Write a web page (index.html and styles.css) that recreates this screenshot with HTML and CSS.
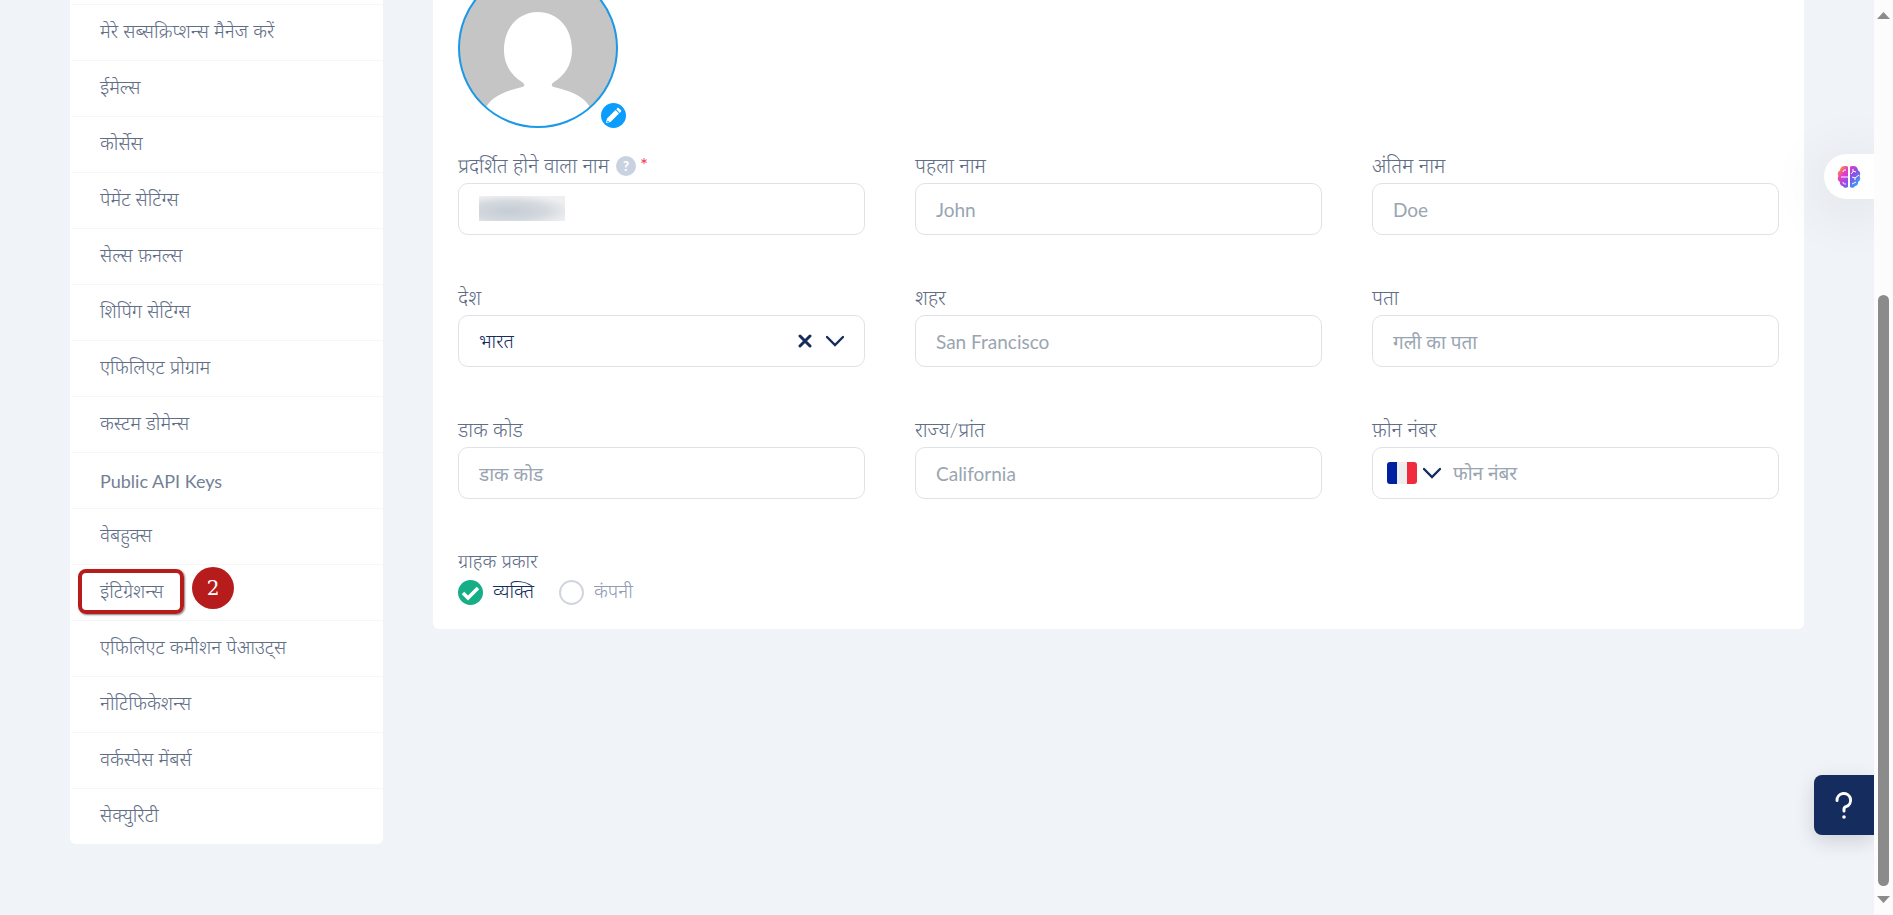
FILE: index.html
```html
<!DOCTYPE html>
<html lang="hi">
<head>
    <meta charset="UTF-8">
    <title>प्रोफ़ाइल</title>
    <link rel="stylesheet" href="styles.css">
</head>
<body>
    <div class="page">
        <nav class="sidebar">
            <ul class="menu">
                <li><a href="#">मेरे सब्सक्रिप्शन्स मैनेज करें</a></li>
                <li><a href="#">ईमेल्स</a></li>
                <li><a href="#">कोर्सेस</a></li>
                <li><a href="#">पेमेंट सेटिंग्स</a></li>
                <li><a href="#">सेल्स फ़नल्स</a></li>
                <li><a href="#">शिपिंग सेटिंग्स</a></li>
                <li><a href="#">एफिलिएट प्रोग्राम</a></li>
                <li><a href="#">कस्टम डोमेन्स</a></li>
                <li><a href="#" class="latin" lang="en">Public API Keys</a></li>
                <li><a href="#">वेबहुक्स</a></li>
                <li class="marked">
                    <a href="#">इंटिग्रेशन्स</a>
                    <span class="mark-box"></span>
                    <span class="mark-step">2</span>
                </li>
                <li><a href="#">एफिलिएट कमीशन पेआउट्स</a></li>
                <li><a href="#">नोटिफिकेशन्स</a></li>
                <li><a href="#">वर्कस्पेस मेंबर्स</a></li>
                <li><a href="#">सेक्युरिटी</a></li>
            </ul>
        </nav>

        <main class="card">
            <div class="avatar">
                <svg class="avatar-img" viewBox="0 0 160 160" aria-hidden="true">
                    <defs>
                        <clipPath id="circle"><circle cx="80" cy="80" r="79"/></clipPath>
                    </defs>
                    <g clip-path="url(#circle)">
                        <rect width="160" height="160" fill="#c5c5c5"/>
                        <path fill="#fff" d="M80 44c19 0 34 15 34 38 0 15-8 26-18 32-3 2-3 4 0 5 15 4 30 8 37 22v19H27v-19c7-14 22-18 37-22 3-1 3-3 0-5-10-6-18-17-18-32 0-23 15-38 34-38z"/>
                    </g>
                    <circle cx="80" cy="80" r="79" fill="none" stroke="#1b98e8" stroke-width="2"/>
                </svg>
                <button class="avatar-edit" aria-label="एडिट">
                    <svg width="25" height="25" viewBox="0 0 25 25" aria-hidden="true">
                        <path fill="#fff" d="M5 20l1-4.500 8.500-8.500 3.500 3.500L9.500 19zM15.300 6.200l1-1c.5-.5 1.100-.5 1.600 0l2 2c.5.5.5 1.100 0 1.600l-1.100 1.100z"/>
                        <circle cx="7" cy="18.500" r=".8" fill="#0a9dfc"/>
                    </svg>
                </button>
            </div>

            <form class="fields">
                <div class="field">
                    <div class="label-row">
                        <label for="display">प्रदर्शित होने वाला नाम</label>
                        <span class="hint">?</span>
                        <span class="required">*</span>
                    </div>
                    <div class="masked">
                        <input type="text" id="display">
                        <span class="mask"></span>
                    </div>
                </div>
                <div class="field">
                    <label for="first">पहला नाम</label>
                    <input type="text" id="first" placeholder="John">
                </div>
                <div class="field">
                    <label for="last">अंतिम नाम</label>
                    <input type="text" id="last" placeholder="Doe">
                </div>
                <div class="field">
                    <label for="country">देश</label>
                    <div class="box">
                        <select id="country">
                            <option>भारत</option>
                        </select>
                        <button type="button" class="clear" aria-label="हटाएं">
                            <svg width="14" height="14" viewBox="0 0 14 14" aria-hidden="true"><path d="M2 2l10 10M12 2L2 12"/></svg>
                        </button>
                        <svg class="chevron" width="18" height="12" viewBox="0 0 18 12" aria-hidden="true"><path d="M1 2l8 8 8-8"/></svg>
                    </div>
                </div>
                <div class="field">
                    <label for="city">शहर</label>
                    <input type="text" id="city" placeholder="San Francisco">
                </div>
                <div class="field">
                    <label for="address">पता</label>
                    <input type="text" id="address" placeholder="गली का पता">
                </div>
                <div class="field">
                    <label for="zip">डाक कोड</label>
                    <input type="text" id="zip" placeholder="डाक कोड">
                </div>
                <div class="field">
                    <label for="state">राज्य/प्रांत</label>
                    <input type="text" id="state" placeholder="California">
                </div>
                <div class="field">
                    <label for="phone">फ़ोन नंबर</label>
                    <div class="box phone">
                        <button type="button" class="flag-button" aria-label="France">
                            <svg class="flag" width="30" height="22" viewBox="0 0 30 22" aria-hidden="true">
                                <path fill="#00209f" d="M3 0h7v22H3a3 3 0 0 1-3-3V3a3 3 0 0 1 3-3z"/>
                                <path fill="#eee" d="M10 0h10v22H10z"/>
                                <path fill="#ef2b3d" d="M20 0h7a3 3 0 0 1 3 3v16a3 3 0 0 1-3 3h-7z"/>
                            </svg>
                            <svg class="chevron" width="18" height="12" viewBox="0 0 18 12" aria-hidden="true"><path d="M1 2l8 8 8-8"/></svg>
                        </button>
                        <input type="tel" id="phone" placeholder="फोन नंबर">
                    </div>
                </div>
                <fieldset class="customer">
                    <legend>ग्राहक प्रकार</legend>
                    <div class="options">
                        <label class="option"><input type="radio" name="customer" checked><span>व्यक्ति</span></label>
                        <label class="option"><input type="radio" name="customer"><span>कंपनी</span></label>
                    </div>
                </fieldset>
            </form>
        </main>

        <button class="brain" aria-label="AI">
            <svg width="24" height="24" viewBox="0 0 24 24" aria-hidden="true">
                <defs>
                    <linearGradient id="brain" x1="0" y1="0" x2="24" y2="20" gradientUnits="userSpaceOnUse">
                        <stop offset=".1" stop-color="#ff9a1f"/>
                        <stop offset=".35" stop-color="#e63cc8"/>
                        <stop offset=".6" stop-color="#8a4fe6"/>
                        <stop offset="1" stop-color="#22b4ff"/>
                    </linearGradient>
                </defs>
                <path fill="url(#brain)" d="M11 2v20c-1 1-4 1.500-5-1-2 0-3.500-2-3-4-2-1-3-4-1.500-6C0 9 1 6 3 5.500 3 3 5 1 7.500 1 9 .7 10.500 1 11 2zM13 2v20c1 1 4 1.500 5-1 2 0 3.500-2 3-4 2-1 3-4 1.500-6C24 9 23 6 21 5.500 21 3 19 1 16.500 1 15 .7 13.500 1 13 2z"/>
                <path fill="none" stroke="#fff" d="M4 12h7M6 7c0-2 1-2 3-2M6 17c0 2 1 2 3 2M16 4v3l-2 2M16 6l3 1M22 10l-4 3v2M18 13l-3-1M19 17l-4 2"/>
            </svg>
        </button>
        <button class="help" aria-label="सहायता">
            <svg width="18" height="28" viewBox="0 0 18 28" aria-hidden="true">
                <path fill="none" stroke="#fff" stroke-width="3" stroke-linecap="round" stroke-linejoin="round" d="M2 9.500A6.800 6.800 0 1 1 11 15.700c-1.500.5-2 1-2 2.300v2"/>
                <circle cx="9" cy="26" r="1.800" fill="#fff"/>
            </svg>
        </button>
    </div>

    <div class="scrollbar">
        <svg width="13" height="7" viewBox="0 0 13 7" aria-hidden="true"><path fill="#8b8b8b" d="M0 7L6.500 0 13 7z"/></svg>
        <div class="track"><div class="thumb"></div></div>
        <svg width="13" height="7" viewBox="0 0 13 7" aria-hidden="true"><path fill="#8b8b8b" d="M0 0l6.500 7L13 0z"/></svg>
    </div>
</body>
</html>
```

FILE: styles.css
```css
* {
    box-sizing: border-box;
}

body {
    margin: 0;
    height: 100vh;
    display: flex;
    overflow: hidden;
    font-family: Lato, "Noto Sans Devanagari", "Noto Sans", sans-serif;
    font-size: 19px;
    font-weight: 300;
    line-height: 24px;
    color: #5f6e86;
    background: #f0f4f9;
}

button {
    padding: 0;
    border: 0;
    background: none;
    cursor: pointer;
}

input, select {
    font: inherit;
}

.page {
    flex: 1;
    position: relative;
    display: flex;
    align-items: flex-start;
    gap: 50px;
    padding: 0 70px;
    overflow: hidden;
}

/* sidebar */
.sidebar {
    width: 313px;
    padding: 4px 0 0 2px;
    background: #fff;
    border-radius: 0 0 6px 6px;
}

.menu {
    margin: 0;
    padding: 0;
    list-style: none;
}

.menu li {
    position: relative;
    height: 56px;
    border-top: 1px solid #f4f6f8;
}

.menu a {
    display: block;
    padding: 14px 28px;
    color: #5f6e86;
    text-decoration: none;
}

.menu .latin {
    padding-top: 16px;
    color: #728096;
    font-size: 18px;
    font-weight: 400;
}

.mark-box {
    position: absolute;
    left: 6px;
    top: 4px;
    width: 106px;
    height: 45px;
    border: 4px solid #b71c1c;
    border-radius: 8px;
    box-shadow: 1px 1px 2px rgba(0, 0, 0, .5);
}

.mark-step {
    position: absolute;
    left: 120px;
    top: 2px;
    width: 42px;
    height: 42px;
    border-radius: 50%;
    background: #b71c1c;
    color: #fff;
    font: 20px/42px "DejaVu Serif", serif;
    text-align: center;
}

/* profile card */
.card {
    flex: 1;
    padding: 0 25px 24px;
    margin-top: -32px;
    background: #fff;
    border-radius: 0 0 6px 6px;
}

.avatar {
    position: relative;
    width: 160px;
    height: 160px;
}

.avatar-img {
    display: block;
    width: 100%;
}

.avatar-edit {
    position: absolute;
    right: -8px;
    bottom: 0;
    width: 25px;
    height: 25px;
    border-radius: 50%;
    background: #0a9dfc;
}

.avatar-edit svg {
    display: block;
}

.fields {
    display: grid;
    grid-template-columns: repeat(3, 1fr);
    gap: 50px;
    padding-top: 25px;
}

.field {
    min-width: 0;
}

.field label {
    display: block;
    height: 30px;
    font-size: 20px;
}

.label-row {
    display: flex;
}

.hint {
    width: 20px;
    height: 20px;
    margin: 3px 4px 0 7px;
    border-radius: 50%;
    background: #c9d2e0;
    color: #fff;
    font: 900 13px/20px Lato, sans-serif;
    text-align: center;
}

.required {
    color: #f5365c;
    font-weight: 400;
}

.field > input, .masked input, .box {
    display: block;
    width: 100%;
    height: 52px;
    padding: 0 20px;
    border: 1px solid #dfe2e6;
    border-radius: 10px;
    background: #fff;
    color: #152c5e;
}

.field input {
    font-weight: 400;
}

input::placeholder {
    color: #9aa5b1;
    opacity: 1;
}

.masked {
    position: relative;
}

.mask {
    position: absolute;
    left: 21px;
    top: 13px;
    width: 86px;
    height: 25px;
    background: radial-gradient(ellipse 75% 65% at 35% 60%, #c6ccd4, #d3d8de 55%, #eeeff1);
}

.field .box {
    display: flex;
    align-items: center;
}

.box select, .box input {
    flex: 1;
    min-width: 0;
    padding: 0;
    border: 0;
    outline: 0;
    appearance: none;
    background: none;
    color: #152c5e;
}

.clear {
    display: flex;
    margin-right: 14px;
}

.clear path, .chevron path {
    fill: none;
    stroke: #152c5e;
    stroke-width: 3;
    stroke-linecap: round;
}

.chevron path {
    stroke-width: 2.4;
}

.field .phone {
    padding-left: 14px;
}

.flag-button {
    display: flex;
    align-items: center;
    gap: 6px;
    margin-right: 12px;
}

.customer {
    margin: 0;
    padding: 0;
    border: 0;
}

.customer legend {
    height: 30px;
    padding: 0;
}

.options {
    display: flex;
    gap: 25px;
}

.option {
    display: flex;
    align-items: center;
    gap: 10px;
    color: #8f9bb3;
}

.option span {
    height: 26px;
}

.option input {
    appearance: none;
    width: 25px;
    height: 25px;
    margin: 0;
    border: 2px solid #d0d5e0;
    border-radius: 50%;
}

.option input:checked {
    border: 0;
    background: #16ae86 url("data:image/svg+xml,%3Csvg xmlns='http://www.w3.org/2000/svg' viewBox='0 0 25 25'%3E%3Cpath d='M5 13l5 5 10-10' fill='none' stroke='white' stroke-width='3.500'/%3E%3C/svg%3E");
}

.option input:checked + span {
    color: #152c5e;
}

/* floating buttons */
.brain, .help {
    position: absolute;
    right: 0;
    display: flex;
    align-items: center;
}

.brain {
    top: 154px;
    width: 50px;
    height: 45px;
    padding-left: 13px;
    border-radius: 23px 0 0 23px;
    background: #fff;
    box-shadow: 0 8px 60px rgba(0, 0, 0, .12);
}

.help {
    bottom: 80px;
    width: 60px;
    height: 60px;
    justify-content: center;
    border-radius: 8px 0 0 8px;
    background: #152c5e;
    box-shadow: 0 6px 20px rgba(0, 0, 0, .15);
}

.scrollbar {
    width: 19px;
    display: flex;
    flex-direction: column;
    align-items: center;
    padding: 12px 0;
    background: #fcfcfc;
}

.track {
    flex: 1;
    display: flex;
    flex-direction: column;
    justify-content: flex-end;
    padding: 10px 0;
}

.thumb {
    width: 11px;
    height: 69%;
    border-radius: 6px;
    background: #8b8b8b;
}
```
